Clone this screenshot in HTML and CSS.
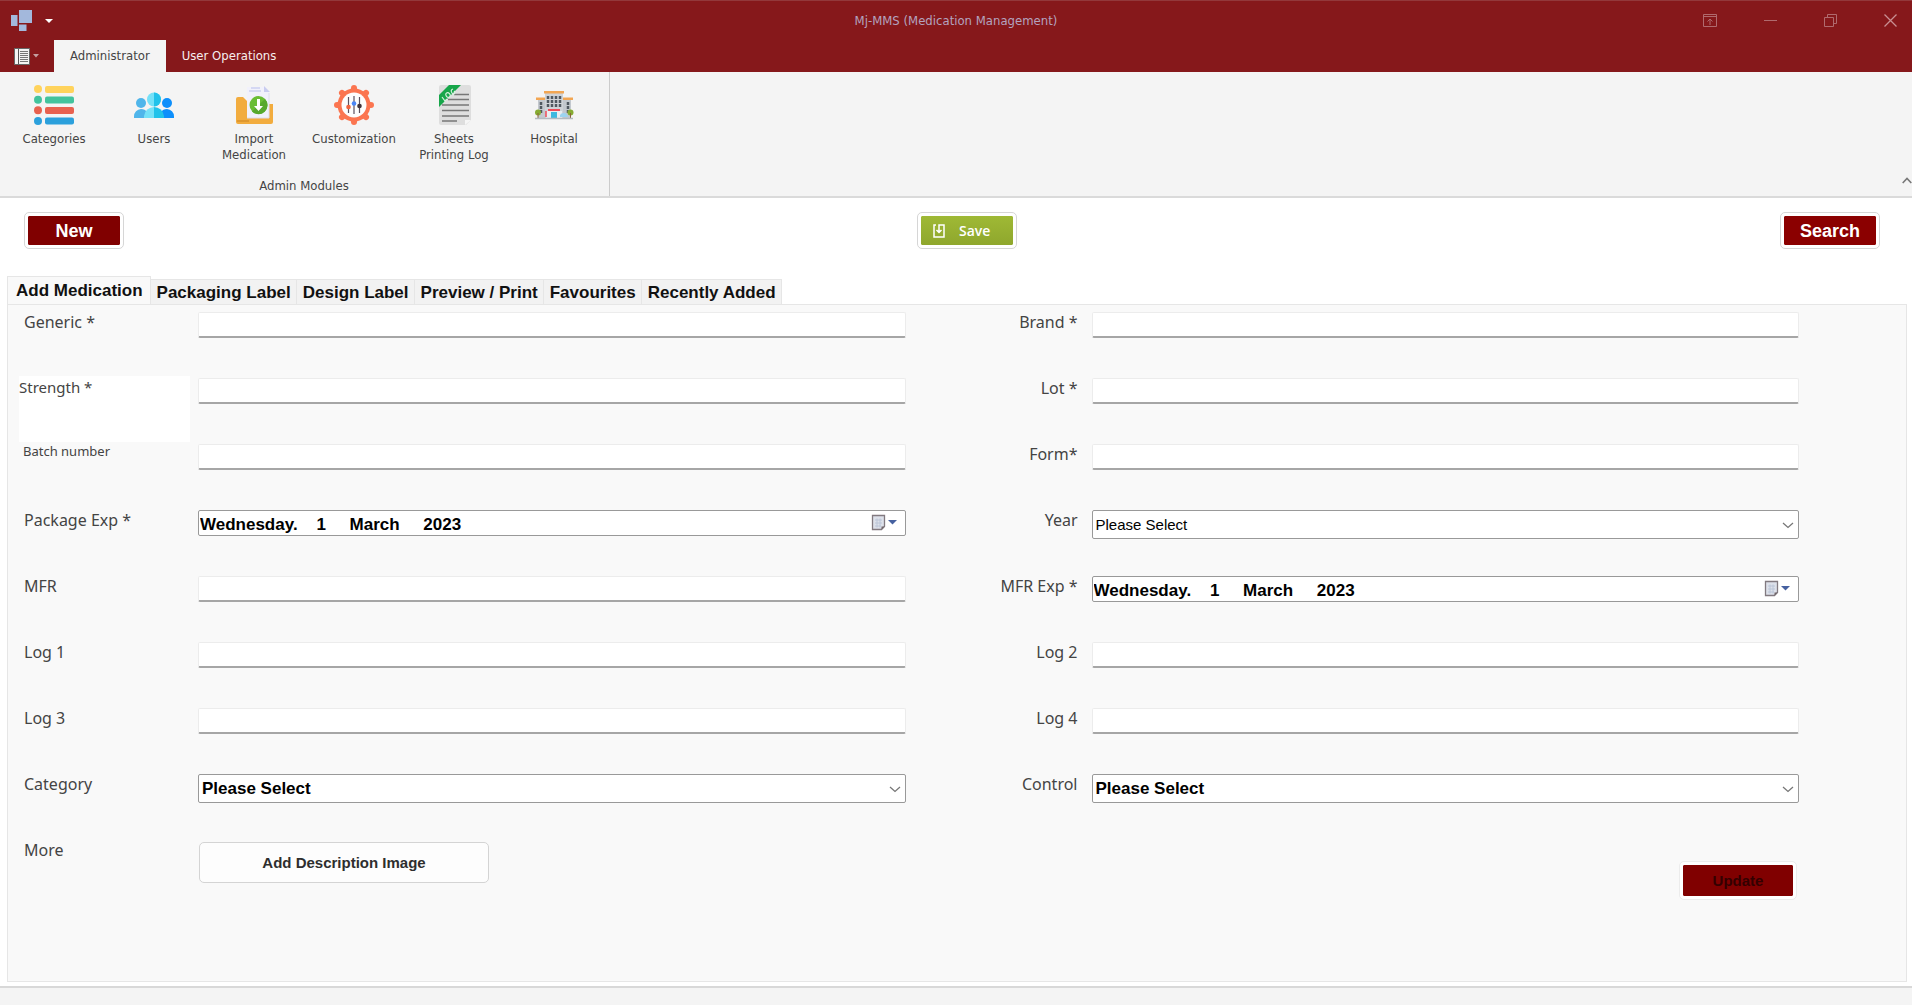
FILE: index.html
```html
<!DOCTYPE html>
<html lang="en">
<head>
<meta charset="utf-8">
<title>Mj-MMS (Medication Management)</title>
<link rel="stylesheet" href="styles.css">
</head>
<body>
<header class="chrome">
  <div class="titlebar">
    <div class="quick">
      <svg width="21" height="21" viewBox="0 0 21 21" aria-hidden="true"><g fill="#a3b8dc"><path d="M8 0h13v13H8zM0 5h6.500v11H0zM8 14.500h7.500V21H8z"/></g></svg>
      <button class="plain" aria-label="Customize quick access"><svg width="8" height="4" viewBox="0 0 8 4"><path d="M0 0h8L4 4z" fill="#fff"/></svg></button>
    </div>
    <h1 class="title">Mj-MMS (Medication Management)</h1>
    <div class="window-buttons">
      <button class="plain" aria-label="Ribbon display options"><svg width="15" height="13" viewBox="0 0 15 13"><path d="M.5.5h13v12H.500zM.500 2.500h13M7 11V5M4.500 7.500L7 5l2.500 2.500" fill="none" stroke="#b06a6e"/></svg></button>
      <button class="plain" aria-label="Minimize"><svg width="13" height="13" viewBox="0 0 13 13"><path d="M0 6.500h13" stroke="#b06a6e"/></svg></button>
      <button class="plain" aria-label="Restore"><svg width="13" height="13" viewBox="0 0 13 13"><path d="M.5 3.500h9v9h-9zM3.500 3V.5h9v9H10" fill="none" stroke="#b06a6e"/></svg></button>
      <button class="plain" aria-label="Close"><svg width="13" height="13" viewBox="0 0 13 13"><path d="M.5.5l12 12M12.500.5l-12 12" fill="none" stroke="#c88f92" stroke-width="1.300"/></svg></button>
    </div>
  </div>
  <nav class="ribbon-tabs">
    <button class="plain file-menu" aria-label="Application menu">
      <svg width="16" height="17" viewBox="0 0 16 17"><path d="M.5.5h15v16H.500z" fill="#f4f4f4" stroke="#666"/><path d="M4.500 1v15" stroke="#555"/><path d="M6 3.500h8M6 5.500h8M6 7.500h8M6 9.500h8M6 11.500h8M6 13.500h8" stroke="#777"/></svg>
      <svg width="6" height="4" viewBox="0 0 6 4"><path d="M0 0h6L3 3.500z" fill="#c49ea0"/></svg>
    </button>
    <button class="ribbon-tab active">Administrator</button>
    <button class="ribbon-tab">User Operations</button>
  </nav>
</header>

<section class="ribbon">
  <div class="ribbon-group">
    <div class="tools">
      <button class="tool">
        <svg width="40" height="40" viewBox="0 0 40 40"><g fill="#ffd35c"><circle cx="4" cy="4" r="4"/><rect x="11" y="1" width="29" height="7" rx="2"/></g><g fill="#43c39d"><circle cx="4" cy="14.700" r="4"/><rect x="11" y="11.500" width="29" height="7" rx="2"/></g><g fill="#e8614f"><circle cx="4" cy="25.300" r="4"/><rect x="11" y="22" width="29" height="7" rx="2"/></g><g fill="#2ba0dc"><circle cx="4" cy="36" r="4"/><rect x="11" y="32.500" width="29" height="7" rx="2"/></g></svg>
        <span>Categories</span>
      </button>
      <button class="tool">
        <svg width="40" height="40" viewBox="0 0 40 40"><g fill="#4fb5ea"><circle cx="7" cy="18" r="5"/><path d="M0 33v-1.500A7.500 7.500 0 0 1 7 24q4 0 6 3v6z"/></g><g fill="#0d8ffb"><circle cx="33" cy="18" r="5"/><path d="M40 33v-1.500A7.500 7.500 0 0 0 33 24q-4 0-6 3v6z"/></g><circle cx="20" cy="14.500" r="7" fill="#74e1f8"/><path d="M20 7.500a7 7 0 0 1 0 14z" fill="#21c2ea"/><path d="M10 33v-2a10 10 0 0 1 10-9v11z" fill="#74e1f8"/><path d="M30 33v-2a10 10 0 0 0-10-9v11z" fill="#21c2ea"/></svg>
        <span>Users</span>
      </button>
      <button class="tool">
        <svg width="40" height="40" viewBox="0 0 40 40"><path d="M2 14q0-2 2-2h5l4 4v5h22v-2h4v18q0 2-2 2H4q-2 0-2-2z" fill="#f2ac3e"/><path d="M13 2h17l5 5v26H13z" fill="#f1f1fb"/><path d="M30 1v6h6z" fill="#c9ccef"/><path d="M15 6h12M17 3h9" stroke="#d5d8f3" stroke-width="2"/><path d="M13 33h22M35 8v25" stroke="#dcdcec"/><circle cx="24.500" cy="20" r="9" fill="#69bd35"/><path d="M18 26.500A9 9 0 0 0 31 14z" fill="#57a82d"/><path d="M23 14h3v7h3l-4.500 5-4.500-5h3z" fill="#fff"/><path d="M3 36h12" stroke="#df982f" stroke-width="2"/></svg>
        <span>Import<br>Medication</span>
      </button>
      <button class="tool">
        <svg width="40" height="40" viewBox="0 0 40 40"><g fill="#fb7550"><circle cx="20" cy="20" r="16.500"/><rect x="17" y="0" width="6" height="40" rx="3"/><rect x="0" y="17" width="40" height="6" rx="3"/><g transform="rotate(45 20 20)"><rect x="17" y="0" width="6" height="40" rx="3"/><rect x="0" y="17" width="40" height="6" rx="3"/></g></g><circle cx="20" cy="20" r="12.500" fill="#fdfdfd"/><path d="M14.500 12v16M20 11v18M25.500 12v16" stroke="#5b5260" stroke-width="1.200"/><circle cx="14.500" cy="22" r="2.300" fill="#f0643f"/><circle cx="20" cy="18.500" r="2.300" fill="#4a86f7"/><circle cx="25.500" cy="21" r="2.300" fill="#40343c"/></svg>
        <span>Customization</span>
      </button>
      <button class="tool">
        <svg width="40" height="40" viewBox="0 0 40 40"><path d="M5 2q0-2 2-2h28q2 0 2 2v33l-5 5H7q-2 0-2-2z" fill="#dedede"/><path d="M31 40v-5h6z" fill="#f6f6f6"/><path d="M20 9.500h15M14 14.500h21M8 20h27M8 25.500h27M8 31h27M8 36h15" stroke="#777" stroke-width="1.300"/><path d="M15 0h12L5 22V10z" fill="#17a64a"/><g fill="none" stroke="#d7f0df" stroke-width="1.200"><path d="M8 12l3 4 2-2"/><ellipse cx="14" cy="10" rx="2" ry="2.500" transform="rotate(-40 14 10)"/><path d="M19 4q-3 1-1 4t3-1l-1-1"/></g></svg>
        <span>Sheets<br>Printing Log</span>
      </button>
      <button class="tool">
        <svg width="40" height="40" viewBox="0 0 40 40"><path d="M11 8h18v26H11z" fill="#cfd3d8"/><path d="M4 14h7v20H4zM29 14h8v20h-8z" fill="#c3c8ce"/><path d="M10 6h20v2.500H10zM2 12.500h9V15H2zM29 12.500h10V15H29z" fill="#f2a653"/><g stroke="#505860" stroke-width="2.500" stroke-dasharray="3 1"><path d="M14 11v11M18 11v11M22 11v11M26 11v11M7 17v12M34 17v12"/></g><path d="M14 24h12v2H14z" fill="#ee4a58"/><path d="M12 26h16v7H12z" fill="#e8edf0"/><path d="M17 27h6v6h-6z" fill="#3db8df"/><path d="M12 26v6" stroke="#ee4a58" stroke-width="1.500"/><path d="M26 30q1-2 4-2t4 4h-8z" fill="#9cd4f0"/><circle cx="4" cy="27.500" r="3" fill="#86ab31"/><circle cx="36.500" cy="27.500" r="3" fill="#86ab31"/><path d="M4 28v5M36.500 28v5" stroke="#8a623c"/><path d="M1 33.500h38" stroke="#b3bac0" stroke-width="1.500"/></svg>
        <span>Hospital</span>
      </button>
    </div>
    <h2 class="group-name">Admin Modules</h2>
  </div>
  <button class="plain collapse" aria-label="Collapse ribbon"><svg width="10" height="7" viewBox="0 0 10 7"><path d="M.7 6L5 1.500 9.300 6" fill="none" stroke="#777" stroke-width="1.600"/></svg></button>
</section>

<main class="workspace">
  <div class="actions">
    <button class="framed new">New</button>
    <button class="framed save"><svg width="12" height="14" viewBox="0 0 12 14"><path d="M3 1H1v12h10V1H6v7M3.500 6L6 8.500 8.500 6" fill="none" stroke="#fff" stroke-width="1.500"/></svg>Save</button>
    <button class="framed search">Search</button>
  </div>

  <div class="tabs">
    <button class="tab active">Add Medication</button>
    <button class="tab">Packaging Label</button>
    <button class="tab">Design Label</button>
    <button class="tab">Preview / Print</button>
    <button class="tab">Favourites</button>
    <button class="tab">Recently Added</button>
  </div>

  <form class="panel">
    <label class="label" for="generic">Generic *</label>
    <input class="field" id="generic">
    <label class="label right" for="brand">Brand *</label>
    <input class="field" id="brand">

    <label class="label filled" for="strength">Strength *</label>
    <input class="field" id="strength">
    <label class="label right" for="lot">Lot *</label>
    <input class="field" id="lot">

    <label class="label small" for="batch">Batch number</label>
    <input class="field" id="batch">
    <label class="label right" for="form">Form*</label>
    <input class="field" id="form">

    <label class="label" for="package-exp">Package Exp *</label>
    <div class="date">
      <input class="date-text" id="package-exp" value="Wednesday.    1     March     2023">
      <button type="button" class="plain picker" aria-label="Open calendar"><svg width="26" height="18" viewBox="0 0 26 18"><path d="M1.500 1.500h12v11l-3 3h-9z" fill="#dde1ea" stroke="#827a80" stroke-width="1.300"/><path d="M4 6h7M4 9h7M4 12h6M6 4.500v9M9 4.500v9" stroke="#bcc6d8"/><path d="M10.500 15.500v-3h3z" fill="#6f6469"/><path d="M17 6h9l-4.500 4.500z" fill="#4661a0"/></svg></button>
    </div>
    <label class="label right" for="year">Year</label>
    <div class="select">
      <select class="choice light" id="year"><option>Please Select</option></select>
      <svg class="chevron" width="12" height="7" viewBox="0 0 12 7"><path d="M1 1l5 4.500L11 1" fill="none" stroke="#777" stroke-width="1.300"/></svg>
    </div>

    <label class="label" for="mfr">MFR</label>
    <input class="field" id="mfr">
    <label class="label right" for="mfr-exp">MFR Exp *</label>
    <div class="date">
      <input class="date-text" id="mfr-exp" value="Wednesday.    1     March     2023">
      <button type="button" class="plain picker" aria-label="Open calendar"><svg width="26" height="18" viewBox="0 0 26 18"><path d="M1.500 1.500h12v11l-3 3h-9z" fill="#dde1ea" stroke="#827a80" stroke-width="1.300"/><path d="M4 6h7M4 9h7M4 12h6M6 4.500v9M9 4.500v9" stroke="#bcc6d8"/><path d="M10.500 15.500v-3h3z" fill="#6f6469"/><path d="M17 6h9l-4.500 4.500z" fill="#4661a0"/></svg></button>
    </div>

    <label class="label" for="log1">Log 1</label>
    <input class="field" id="log1">
    <label class="label right" for="log2">Log 2</label>
    <input class="field" id="log2">

    <label class="label" for="log3">Log 3</label>
    <input class="field" id="log3">
    <label class="label right" for="log4">Log 4</label>
    <input class="field" id="log4">

    <label class="label" for="category">Category</label>
    <div class="select">
      <select class="choice" id="category"><option>Please Select</option></select>
      <svg class="chevron" width="12" height="7" viewBox="0 0 12 7"><path d="M1 1l5 4.500L11 1" fill="none" stroke="#777" stroke-width="1.300"/></svg>
    </div>
    <label class="label right" for="control">Control</label>
    <div class="select">
      <select class="choice" id="control"><option>Please Select</option></select>
      <svg class="chevron" width="12" height="7" viewBox="0 0 12 7"><path d="M1 1l5 4.500L11 1" fill="none" stroke="#777" stroke-width="1.300"/></svg>
    </div>

    <label class="label" for="more">More</label>
    <button type="button" class="describe" id="more">Add Description Image</button>
    <button type="button" class="framed update" disabled>Update</button>
  </form>
</main>
<footer class="status"></footer>
</body>
</html>
```
FILE: styles.css
```css
* { box-sizing: border-box; }

body {
  margin: 0;
  min-height: 100vh;
  display: flex;
  flex-direction: column;
  background: #fff;
  color: #444;
  font: 13px/16px "DejaVu Sans Condensed", "Noto Sans", sans-serif;
}

button, input, select { font: inherit; color: inherit; margin: 0; }
button { padding: 0; border: 0; background: none; }
svg { display: block; flex: none; }

.plain { display: flex; align-items: center; justify-content: center; }

/* Window chrome */
.chrome { background: #86181b; border-top: 1px solid #93383b; }
.titlebar { height: 39px; display: grid; grid-template-columns: 1fr auto 1fr; align-items: center; }
.quick { display: flex; align-items: center; gap: 13px; padding-left: 11px; }
.title { margin: 0; font-size: 13px; font-weight: 400; color: #b3a3bf; }
.window-buttons { display: flex; justify-content: flex-end; gap: 16px; }
.window-buttons .plain { width: 44px; height: 36px; }

.ribbon-tabs { height: 32px; display: flex; }
.file-menu { width: 54px; gap: 3px; padding-right: 2px; }
.ribbon-tab { padding: 0 16px; color: #f6eeee; }
.ribbon-tab.active { background: #f4f4f4; color: #444; }

/* Ribbon */
.ribbon { display: flex; justify-content: space-between; background: #f4f4f4; border-bottom: 2px solid #dadada; }
.ribbon-group { width: 610px; height: 124px; padding: 13px 5px 0 4px; border-right: 1px solid #ccc; display: flex; flex-direction: column; }
.tools { display: grid; grid-template-columns: repeat(6, 100px); height: 93px; }
.tool { display: flex; flex-direction: column; align-items: center; gap: 6px; }
.group-name { margin: 0; font-size: 13px; font-weight: 400; text-align: center; }
.collapse { align-self: flex-end; padding-bottom: 12px; }

/* Workspace */
.workspace { flex: 1; display: flex; flex-direction: column; padding: 14px 5px 4px 7px; }
.actions { display: grid; grid-template-columns: 893fr 863fr auto; padding: 0 27px 0 17px; }

.framed {
  width: 100px;
  height: 37px;
  border: 1px solid #d6d6d6;
  border-radius: 5px;
  padding: 3px;
  background: #800000 content-box;
  box-shadow: inset 0 0 0 3px #fff;
  color: #fff;
  font: bold 18px/20px "Liberation Sans", Arial, sans-serif;
}
.framed.search { background-color: #8b0000; }
.framed.save {
  display: flex;
  align-items: center;
  gap: 14px;
  background: linear-gradient(#9fb935, #8fa72d) content-box;
  font: 600 14px/20px "Open Sans", sans-serif;
}
.save svg { margin-left: 12px; }

.tabs { display: flex; align-items: flex-end; margin-top: 27px; }
.tab {
  height: 25px;
  padding: 2px 5px 0 6px;
  border: 1px solid #e6e6e6;
  border-width: 1px 1px 0 0;
  background: #f2f2f2;
  color: #111;
  font: bold 17px/20px "Liberation Sans", Arial, sans-serif;
}
.tab.active { height: 28px; padding: 0 7px 0 8px; border-left-width: 1px; background: #f9f9f9; }

.panel {
  flex: 1;
  display: grid;
  grid-template-columns: 179px 1fr 186px 1fr;
  grid-auto-rows: 66px;
  align-content: start;
  padding: 5px 107px 0 11px;
  border: 1px solid #e6e6e6;
  background: #f9f9f9;
}
.label { padding: 1px 0 0 5px; font: 16px/22px "Noto Sans", "Open Sans", sans-serif; }
.label.right { padding-right: 14px; text-align: right; }
.label.filled { width: 171px; padding: 0; background: #fff; font-size: 15px; }
.label.small { padding: 0 0 0 4px; font-size: 13px; line-height: 18px; }

.field {
  width: 100%;
  height: 26px;
  margin-top: 2px;
  border: 1px solid #ececec;
  border-bottom: 2px solid #a6a6a6;
  border-radius: 2px;
  background: #fff;
}
.date { display: flex; height: 26px; margin-top: 2px; border: 1px solid #999; border-radius: 2px; background: #fff; }
.date-text {
  flex: 1;
  min-width: 0;
  padding: 3px 1px 0;
  border: 0;
  background: none;
  color: #000;
  font: bold 17px/20px "Liberation Sans", Arial, sans-serif;
}
.picker { padding-right: 8px; }
.select { position: relative; height: 29px; margin-top: 2px; }
.choice {
  appearance: none;
  width: 100%;
  height: 29px;
  padding: 0 24px 0 3px;
  border: 1px solid #999;
  border-radius: 2px;
  background: #fff;
  color: #000;
  font: bold 17px/20px "Liberation Sans", Arial, sans-serif;
}
.choice.light { font-weight: 400; font-size: 15px; }
.chevron { position: absolute; right: 5px; top: 12px; pointer-events: none; }

.describe {
  width: 290px;
  height: 41px;
  margin: 4px 0 0 1px;
  border: 1px solid #d4d4d4;
  border-radius: 5px;
  background: #fdfdfd;
  color: #2e2e2e;
  font: bold 15px/20px "Liberation Sans", Arial, sans-serif;
}
.framed.update {
  grid-column: 4;
  justify-self: end;
  width: 118px;
  height: 39px;
  margin: 23px 2px 0 0;
  border-color: #ececec;
  color: #330000;
  font-size: 15px;
}

.status { height: 19px; border-top: 2px solid #d8d8d8; background: #f4f4f4; }
```
